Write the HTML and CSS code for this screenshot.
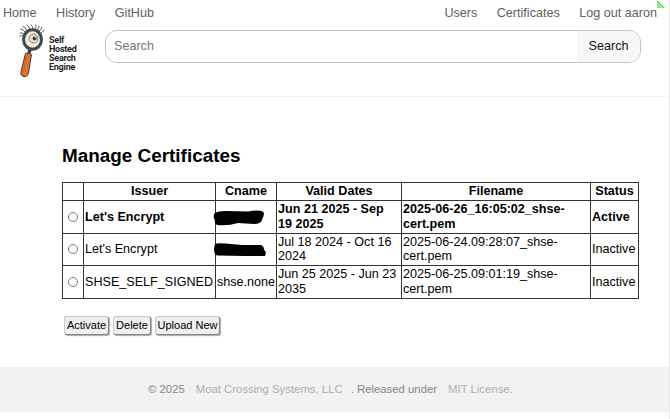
FILE: index.html
```html
<!DOCTYPE html>
<html lang="en">
<head>
<meta charset="utf-8">
<title>Manage Certificates</title>
<link rel="stylesheet" href="styles.css">
</head>
<body>
<svg class="corner" width="8" height="8" viewBox="0 0 8 8"><path d="M0 0L8 8H5.8L0 2.2ZM0 3.2L4.8 8H2.8L0 5.2ZM0 6.2L1.8 8H0Z"/></svg>
<header class="top">
  <nav class="nav">
    <a>Home</a><a>History</a><a>GitHub</a>
    <a class="push">Users</a><a>Certificates</a><a>Log out aaron</a>
  </nav>
  <div class="searchrow">
    <div class="logo">
      <svg width="28" height="54" viewBox="0 0 28 54">
        <g fill="none" stroke="#30383a" stroke-width=".8" stroke-linecap="round">
          <path d="M5 10Q3 8 1 9M6 8Q4 5 1.500 5M8 7Q7 3 4 2.500M11 5Q10 2 8 1M14 5Q14 2 12 .8M16 5Q18 3 17 1M18 6Q21 4 20 2M20 7Q23 6 23 3M22 9Q24 8 25 6M4 12Q2 11 .8 12"/>
        </g>
        <path d="M9.500 24L13 25L11 31L8 30Z" fill="#39474b"/>
        <path d="M6.500 29.500Q10 28 12.500 30.500L9.500 49Q8.500 53 5 52.500Q1 52 2 47.500Z" fill="#dc7133" stroke="#4a382e" stroke-width="1"/>
        <path d="M7.500 32L4.200 48" stroke="#b95b2a" stroke-width=".8" fill="none"/>
        <ellipse cx="13.500" cy="15.500" rx="9" ry="9.700" fill="#f1ead9" stroke="#3d4b50" stroke-width="3"/>
        <circle cx="14.500" cy="14.500" r="4.500" fill="#e5dcc8" stroke="#746f66" stroke-width=".8"/>
        <circle cx="15.700" cy="14.300" r="1.900" fill="#242b2d"/>
        <circle cx="16.200" cy="13.800" r=".6" fill="#fff"/>
      </svg>
      <div class="logotext"><div>Self</div><div>Hosted</div><div>Search</div><div>Engine</div></div>
    </div>
    <div class="search"><span class="field">Search</span><span class="go">Search</span></div>
  </div>
</header>
<main class="main">
  <h1>Manage Certificates</h1>
  <table>
    <colgroup><col class="c1"><col class="c2"><col class="c3"><col class="c4"><col class="c5"><col class="c6"></colgroup>
    <tr class="head"><th></th><th>Issuer</th><th>Cname</th><th>Valid Dates</th><th>Filename</th><th>Status</th></tr>
    <tr class="active"><td><i class="radio"></i></td><td>Let's Encrypt</td><td class="redacted"><svg width="52" height="16" viewBox="0 0 52 16"><path d="M0 4Q2 1 12 1L34 1.500Q48-1 50 3Q50 6 48 10Q47 14 40 14L24 13Q14 16 3 15Q0 13 1 10Q-1 8 0 4Z"/></svg></td><td>Jun 21 2025 - Sep<br>19 2025</td><td>2025-06-26_16:05:02_shse-<br>cert.pem</td><td>Active</td></tr>
    <tr><td><i class="radio"></i></td><td>Let's Encrypt</td><td class="redacted"><svg width="52" height="16" viewBox="0 0 52 16"><path d="M1 2Q2 1 11 1.500L28 3L47 3Q50 4 50 8Q53 9 51 14L31 14L3 13.500Q0 12 0 7Z"/></svg></td><td>Jul 18 2024 - Oct 16<br>2024</td><td>2025-06-24.09:28:07_shse-<br>cert.pem</td><td>Inactive</td></tr>
    <tr><td><i class="radio"></i></td><td>SHSE_SELF_SIGNED</td><td>shse.none</td><td>Jun 25 2025 - Jun 23<br>2035</td><td>2025-06-25.09:01:19_shse-<br>cert.pem</td><td>Inactive</td></tr>
  </table>
  <div class="buttons"><button class="b1">Activate</button><button class="b2">Delete</button><button class="b3">Upload New</button></div>
</main>
<footer class="footer"><span>© 2025</span><a class="company">Moat Crossing Systems, LLC</a><span>. Released under</span><a class="license">MIT License.</a></footer>
</body>
</html>
```
FILE: styles.css
```css
* { box-sizing: border-box; }
body {
  margin: 0;
  height: 419px;
  background: #fff;
  color: #000;
  font: 12.6px/14.5px "Liberation Sans", Arial, sans-serif;
  border-right: 1px solid #e8e8e8;
  position: relative;
  overflow: hidden;
}
.corner { position: absolute; left: 657px; top: 0; fill: #4fe04f; }
.top { height: 97px; border-bottom: 1px solid #f4f4f4; }
.nav { display: flex; gap: 19.5px; height: 24px; padding: 6px 12px 0 3px; color: #606060; white-space: nowrap; }
.push { margin-left: auto; }
.searchrow { display: flex; }
.logo { display: flex; width: 105px; padding-left: 19px; }
.logotext { margin: 12px 0 0 2px; font: bold 9px/9px Roboto, sans-serif; letter-spacing: -.25px; color: #242424; }
.logo svg { flex: none; }
.search {
  display: flex; width: 536px; height: 33px; margin-top: 6px;
  border: 1px solid #c4c4c4; border-radius: 12px; overflow: hidden; line-height: 31px;
}
.field { flex: 1; padding-left: 8px; color: #757575; }
.go { width: 63px; background: #f7f7f7; text-align: center; color: #111; }
.main { height: 270px; padding: 47px 0 0 62px; }
h1 { margin: 0; height: 38px; font-size: 18.9px; line-height: 23px; }
table { width: 576px; table-layout: fixed; border-collapse: collapse; white-space: nowrap; }
.c1 { width: 21px; }
.c2 { width: 132px; }
.c3 { width: 61px; }
.c4 { width: 125px; }
.c5 { width: 189px; }
.c6 { width: 48px; }
th, td { border: 1px solid #333; padding: 0 1px; }
tr { height: 32.6px; }
.head { height: 18px; }
.active { font-weight: bold; }
.radio { display: block; width: 10px; height: 10px; margin-left: 4px; border: 1px solid #777; border-radius: 50%; }
.redacted { padding: 0; }
.redacted svg { display: block; margin-left: -2px; margin-top: 2px; overflow: visible; }
.buttons { display: flex; gap: 4px; margin: 17px 0 0 2px; }
button {
  height: 19px; padding: 0; font: 11px/16px "Liberation Sans", Arial, sans-serif; color: #000;
  background: #efefef; border: 1px solid #c8c8c8; border-right-color: #858585; border-bottom-color: #858585;
  border-radius: 3px; box-shadow: 1px 1px 1px #aaa; white-space: nowrap;
}
.b1 { width: 45px; }
.b2 { width: 38px; }
.b3 { width: 65px; }
.footer { height: 45px; background: #f2f2f2; padding: 15px 0 0 148px; display: flex; font-size: 11.35px; color: #858585; white-space: nowrap; }
.company, .license { color: #aeaeae; }
.company { margin: 0 8px 0 11px; }
.license { margin-left: 11px; }
```
